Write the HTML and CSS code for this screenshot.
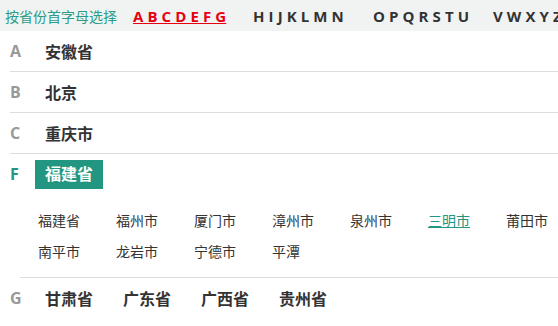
FILE: index.html
```html
<!DOCTYPE html>
<html lang="zh-CN">
<head>
    <meta charset="UTF-8">
    <title>按省份选择</title>
    <link rel="stylesheet" href="styles.css">
</head>
<body>

<!-- 字母导航 -->
<div class="letter-bar">
    <span class="tip">按省份首字母选择</span>
    <a href="#" class="letter-group current">A B C D E F G</a>
    <a href="#" class="letter-group">H I J K L M N</a>
    <a href="#" class="letter-group">O P Q R S T U</a>
    <a href="#" class="letter-group">V W X Y Z</a>
</div>

<div class="province-list">
    <div class="province-row">
        <span class="letter">A</span>
        <span class="name">安徽省</span>
    </div>
    <div class="province-row">
        <span class="letter">B</span>
        <span class="name">北京</span>
    </div>
    <div class="province-row">
        <span class="letter">C</span>
        <span class="name">重庆市</span>
    </div>

    <!-- 展开的省份 -->
    <div class="province-row open">
        <span class="letter">F</span>
        <span class="name badge">福建省</span>
    </div>
    <div class="city-panel">
        <a href="#" class="city">福建省</a>
        <a href="#" class="city">福州市</a>
        <a href="#" class="city">厦门市</a>
        <a href="#" class="city">漳州市</a>
        <a href="#" class="city">泉州市</a>
        <a href="#" class="city selected">三明市</a>
        <a href="#" class="city">莆田市</a>
        <a href="#" class="city">南平市</a>
        <a href="#" class="city">龙岩市</a>
        <a href="#" class="city">宁德市</a>
        <a href="#" class="city">平潭</a>
    </div>

    <div class="province-row last">
        <span class="letter">G</span>
        <span class="name">甘肃省</span>
        <span class="name">广东省</span>
        <span class="name">广西省</span>
        <span class="name">贵州省</span>
    </div>
</div>

</body>
</html>
```

FILE: styles.css
```css
body {
    margin: 0;
    font-family: "Open Sans", "Noto Sans CJK SC", sans-serif;
    color: #333;
    background-color: #fff;
    overflow: hidden;
}

a {
    text-decoration: none;
    color: #333;
}

/* 字母导航 */
.letter-bar {
    display: flex;
    align-items: center;
    height: 31px;
    padding-left: 5px;
    background-color: #f1f3f2;
    white-space: nowrap;
    overflow: hidden;
}

.tip {
    width: 128px;
    flex-shrink: 0;
    font-size: 14px;
    color: #2a9d8a;
}

.letter-group {
    width: 120px;
    flex-shrink: 0;
    font-size: 15px;
    font-weight: bold;
    letter-spacing: 0.1px;
    color: #333;
}

.letter-group.current {
    color: #e60012;
    text-decoration: underline;
}

/* 省份列表 */
.province-row {
    display: flex;
    align-items: center;
    height: 40px;
    margin-left: 10px;
    border-bottom: 1px solid #ddd;
}

.province-row.open,
.province-row.last {
    border-bottom: none;
}

.letter {
    width: 35px;
    flex-shrink: 0;
    font-size: 16px;
    font-weight: bold;
    color: #999;
}

.open .letter {
    color: #229680;
}

.name {
    width: 78px;
    flex-shrink: 0;
    font-size: 16px;
    font-weight: bold;
    color: #333;
}

.badge {
    width: auto;
    margin-left: -10px;
    padding: 0 10px;
    line-height: 29px;
    background-color: #229680;
    color: #fff;
}

/* 城市 */
.city-panel {
    display: grid;
    grid-template-columns: repeat(7, 78px);
    margin-left: 20px;
    padding: 11px 0 10px 18px;
    border-bottom: 1px solid #ddd;
}

.city {
    font-size: 14px;
    line-height: 31px;
}

.city.selected {
    color: #229680;
    text-decoration: underline;
}
```
